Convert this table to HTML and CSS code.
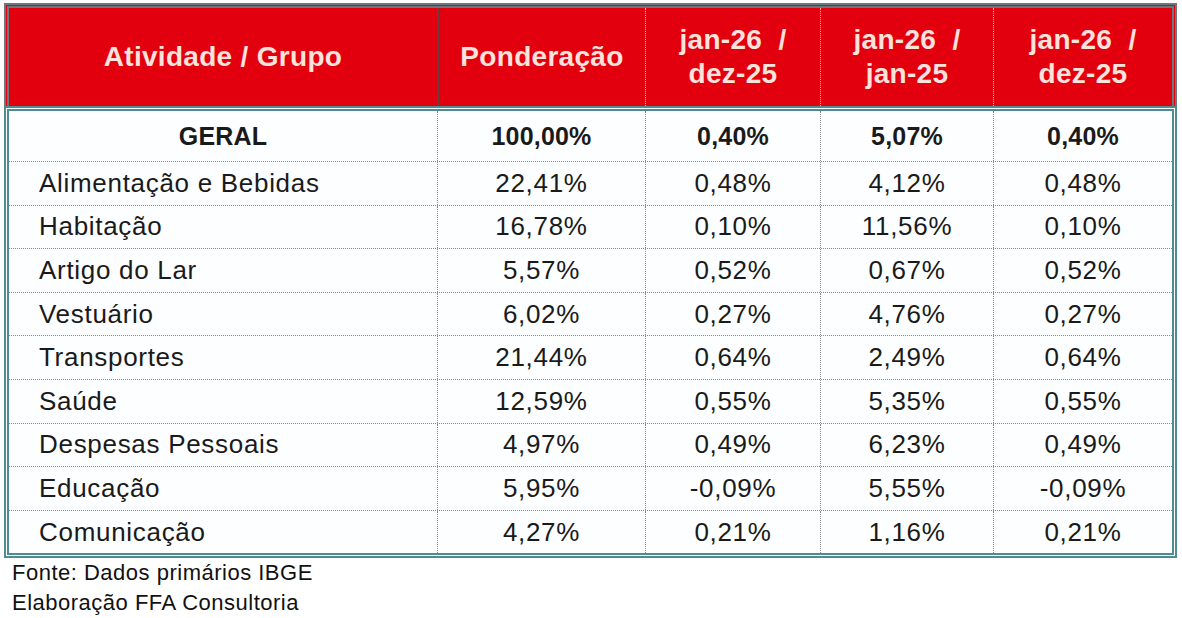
FILE: index.html
```html
<!DOCTYPE html>
<html lang="pt-BR">
<head>
<meta charset="utf-8">
<title>IPC - Atividade / Grupo</title>
<link rel="stylesheet" href="styles.css">
</head>
<body>
<div class="sheet">
  <div class="head">
    <div class="hcell first">Atividade / Grupo</div>
    <div class="hcell solid">Ponderação</div>
    <div class="hcell">jan-26 &nbsp;/<br>dez-25</div>
    <div class="hcell">jan-26 &nbsp;/<br>jan-25</div>
    <div class="hcell">jan-26 &nbsp;/<br>dez-25</div>
  </div>
  <div class="body">
    <div class="row total">
      <div class="cell name center">GERAL</div>
      <div class="cell">100,00%</div>
      <div class="cell">0,40%</div>
      <div class="cell">5,07%</div>
      <div class="cell">0,40%</div>
    </div>
    <div class="row">
      <div class="cell name">Alimentação e Bebidas</div>
      <div class="cell">22,41%</div>
      <div class="cell">0,48%</div>
      <div class="cell">4,12%</div>
      <div class="cell">0,48%</div>
    </div>
    <div class="row">
      <div class="cell name">Habitação</div>
      <div class="cell">16,78%</div>
      <div class="cell">0,10%</div>
      <div class="cell">11,56%</div>
      <div class="cell">0,10%</div>
    </div>
    <div class="row">
      <div class="cell name">Artigo do Lar</div>
      <div class="cell">5,57%</div>
      <div class="cell">0,52%</div>
      <div class="cell">0,67%</div>
      <div class="cell">0,52%</div>
    </div>
    <div class="row">
      <div class="cell name">Vestuário</div>
      <div class="cell">6,02%</div>
      <div class="cell">0,27%</div>
      <div class="cell">4,76%</div>
      <div class="cell">0,27%</div>
    </div>
    <div class="row">
      <div class="cell name">Transportes</div>
      <div class="cell">21,44%</div>
      <div class="cell">0,64%</div>
      <div class="cell">2,49%</div>
      <div class="cell">0,64%</div>
    </div>
    <div class="row">
      <div class="cell name">Saúde</div>
      <div class="cell">12,59%</div>
      <div class="cell">0,55%</div>
      <div class="cell">5,35%</div>
      <div class="cell">0,55%</div>
    </div>
    <div class="row">
      <div class="cell name">Despesas Pessoais</div>
      <div class="cell">4,97%</div>
      <div class="cell">0,49%</div>
      <div class="cell">6,23%</div>
      <div class="cell">0,49%</div>
    </div>
    <div class="row">
      <div class="cell name">Educação</div>
      <div class="cell">5,95%</div>
      <div class="cell">-0,09%</div>
      <div class="cell">5,55%</div>
      <div class="cell">-0,09%</div>
    </div>
    <div class="row">
      <div class="cell name">Comunicação</div>
      <div class="cell">4,27%</div>
      <div class="cell">0,21%</div>
      <div class="cell">1,16%</div>
      <div class="cell">0,21%</div>
    </div>
  </div>
  <div class="notes">
    <p>Fonte: Dados primários IBGE</p>
    <p>Elaboração FFA Consultoria</p>
  </div>
</div>
</body>
</html>
```
FILE: styles.css
```css
html, body {
  margin: 0;
  padding: 0;
  background: #ffffff;
}

.sheet {
  padding: 3px 0 0 4px;
  font-family: "Liberation Sans", Arial, sans-serif;
  color: #1a1a1a;
  width: 1173px;
}

.head,
.row {
  display: grid;
  grid-template-columns: 428px 208px 175px 173px 179px;
}

.head {
  height: 98px;
  background: #e2000f;
  border: 5px double #6e777c;
  border-bottom: none;
}

.hcell {
  display: flex;
  align-items: center;
  justify-content: center;
  text-align: center;
  font-weight: bold;
  font-size: 28px;
  line-height: 34px;
  letter-spacing: 0.3px;
  color: #fde3dc;
  border-left: 1px dotted #f4c2b6;
  box-sizing: border-box;
}

.hcell.first {
  border-left: none;
}

.hcell.solid {
  border-left: 2px solid #6b3a3d;
}

.body {
  background: #fcfeff;
  border: 5px double #4f8c91;
}

.row {
  height: 43.6px;
  border-top: 1px dotted #8a8a8a;
  box-sizing: border-box;
}

.row.total {
  height: 50px;
  border-top: none;
  font-weight: bold;
}

.cell {
  display: flex;
  align-items: center;
  justify-content: center;
  font-size: 26px;
  letter-spacing: 0.7px;
  border-left: 1px dotted #8a8a8a;
  box-sizing: border-box;
  white-space: nowrap;
}

.total .cell {
  font-size: 25px;
  letter-spacing: 0.2px;
}

.cell.name {
  border-left: none;
  justify-content: flex-start;
  padding-left: 30px;
}

.cell.name.center {
  justify-content: center;
  padding-left: 0;
}

.notes {
  padding-left: 8px;
  font-size: 22px;
  letter-spacing: 0.5px;
  line-height: 30px;
  color: #111;
}

.notes p {
  margin: 0;
}
```
